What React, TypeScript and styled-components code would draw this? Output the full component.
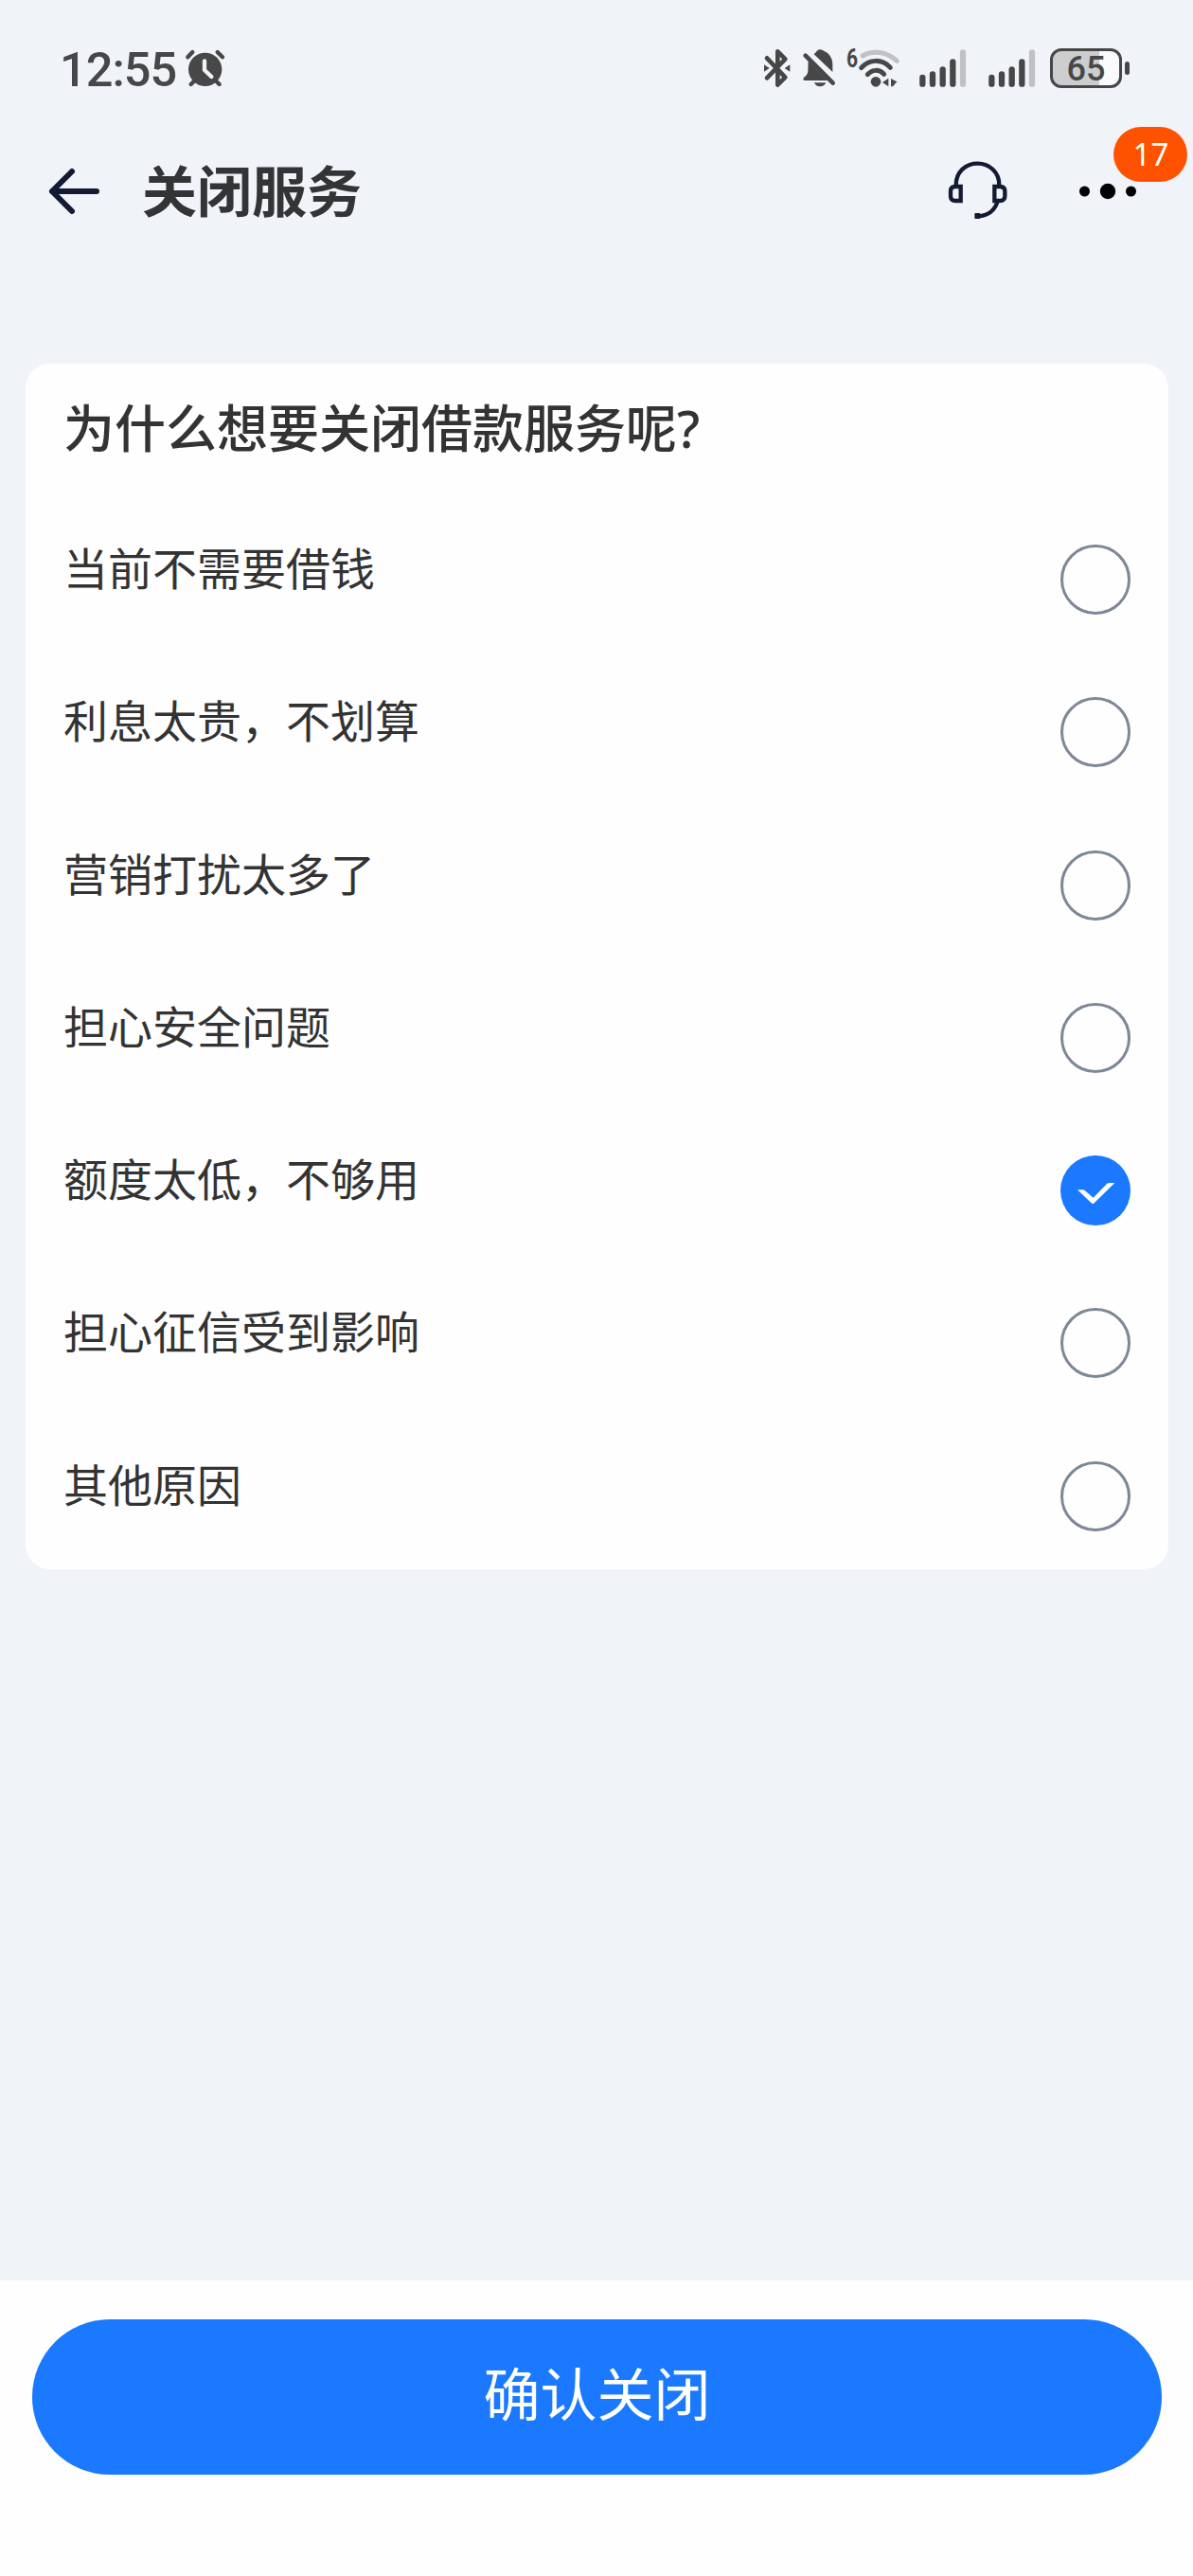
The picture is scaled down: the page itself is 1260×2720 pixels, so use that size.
import React, { useState } from "react";
import styled, { createGlobalStyle } from "styled-components";

const INK = "#474748";
const NAVY = "#141a33";
const BLUE = "#1a79ff";

const GlobalStyle = createGlobalStyle`
  *, *::before, *::after { box-sizing: border-box; }
  html, body { margin: 0; padding: 0; }
  body {
    background: #f0f4f9;
    font-family: "Noto Sans", "Noto Sans CJK SC", sans-serif;
    color: #333333;
  }
  button { font: inherit; border: 0; padding: 0; background: none; color: inherit; cursor: pointer; }
  svg { display: block; overflow: visible; }
`;

const Screen = styled.div`
  width: 1260px;
  height: 2720px;
  display: flex;
  flex-direction: column;
  overflow: hidden;
  background: #f0f4f9;
`;

const StatusBar = styled.header`
  height: 146px;
  padding: 50px 67px 0 63px;
  display: flex;
  align-items: flex-start;
  justify-content: space-between;
`;

const StatusGroup = styled.div`
  display: flex;
  align-items: flex-start;
  height: 45px;
`;

const Clock = styled.time`
  width: 132px;
  font-family: Roboto, "Liberation Sans", sans-serif;
  font-size: 50.5px;
  font-weight: 500;
  line-height: 47px;
  letter-spacing: -1px;
  color: ${INK};
  white-space: nowrap;
`;

const StatusIcon = styled.span<{ $gap: number }>`
  margin-left: ${(p) => p.$gap}px;
`;

const Battery = styled.div`
  margin: 1px 0 0 15px;
  display: flex;
  align-items: center;
  gap: 3px;
`;

const BatteryBody = styled.div`
  width: 76px;
  height: 42px;
  border: 3px solid ${INK};
  border-radius: 12px;
  background: linear-gradient(90deg, #cccdcf 0 49px, #f8fafc 49px);
  background-clip: padding-box;
  display: flex;
  align-items: center;
  justify-content: center;
  font-family: Roboto, "Liberation Sans", sans-serif;
  font-size: 36px;
  font-weight: 500;
  line-height: 38px;
  padding-top: 2px;
  color: ${INK};
`;

const BatteryTip = styled.div`
  width: 5px;
  height: 14px;
  border-radius: 3px;
  background: ${INK};
`;

const NavBar = styled.nav`
  height: 112px;
  padding: 0 57px 0 48px;
  display: flex;
  align-items: center;
`;

const NavTitle = styled.h1`
  margin: 0 auto 0 42px;
  padding-bottom: 1px;
  font-size: 58px;
  font-weight: 700;
  line-height: 80px;
  color: #333436;
`;

const NavButton = styled.button`
  position: relative;
  display: block;
`;

const MoreButton = styled(NavButton)`
  margin-left: 72px;
`;

const Badge = styled.span`
  position: absolute;
  left: 38px;
  top: -40px;
  width: 78px;
  height: 58px;
  padding-left: 1px;
  border-radius: 29px;
  background: #ff5200;
  color: #fff;
  font-size: 33px;
  line-height: 58px;
  text-align: center;
`;

const Card = styled.main`
  margin: 126px 26px 0 27px;
  height: 1273px;
  padding: 29px 40px 0 40px;
  border-radius: 26px;
  background: #fefefe;
`;

const Question = styled.h2`
  margin: 0;
  font-size: 54px;
  font-weight: 500;
  line-height: 78px;
  white-space: nowrap;
`;

const Options = styled.ul`
  margin: 75px 0 0;
  padding: 0;
  list-style: none;
`;

const Option = styled.li`
  height: 161.25px;
  padding-top: 9px;
  display: flex;
  align-items: flex-start;
  justify-content: space-between;
  font-size: 47px;
  line-height: 50px;
  cursor: pointer;
`;

const Radio = styled.span<{ $on: boolean }>`
  width: 74px;
  height: 74px;
  border-radius: 50%;
  border: ${(p) => (p.$on ? "0" : "3px solid #7d8796")};
  background: ${(p) => (p.$on ? BLUE : "transparent")};
`;

const Footer = styled.footer`
  margin-top: auto;
  height: 312px;
  padding: 41px 33px 0 34px;
  background: #fefefe;
`;

const ConfirmButton = styled.button`
  width: 100%;
  height: 164px;
  padding-bottom: 6px;
  border-radius: 82px;
  background: ${BLUE};
  color: #fff;
  font-size: 60px;
  line-height: 158px;
  text-align: center;
`;

const AlarmIcon = () => (
  <svg width="44" height="45" viewBox="465 60 132 135" fill="none" stroke={INK} strokeLinecap="round">
    <circle cx="530" cy="130" r="53" fill={INK} stroke="none" />
    <path d="M475 91L490 75M569 75L585 91M495 167L485 177M565 167L575 177" strokeWidth="13" />
    <path d="M528 103V132L550 153" stroke="#f0f4f9" strokeWidth="13" strokeLinejoin="round" />
  </svg>
);

const BluetoothIcon = () => (
  <svg width="30" height="45" viewBox="78 60 90 135" fill="none" stroke={INK}>
    <path
      d="M90 94L148 155L124 179V73L148 97L90 157"
      strokeWidth="14"
      strokeLinecap="round"
      strokeLinejoin="round"
    />
    <path d="M81 115L98 126L81 137ZM163 115L146 126L163 137Z" fill={INK} stroke="none" />
  </svg>
);

const MutedBellIcon = () => (
  <svg width="38" height="45" viewBox="198 60 114 135" fill={INK}>
    <path d="M221 103L283 165H210Q204 165 205 159Q207 154 213 151Q219 146 220 136Z" />
    <path d="M239 82Q245 77 250 70Q258 64 268 70Q296 82 298 112V138Z" />
    <path d="M240 172H277Q272 184 258 184Q245 184 240 172Z" />
    <path d="M212 86L299 173" stroke={INK} strokeWidth="14" strokeLinecap="round" />
  </svg>
);

const WifiMark = styled.span`
  display: flex;
`;

const WifiBand = styled.span`
  width: 12px;
  margin-top: -2px;
  font-family: Roboto, "Liberation Sans", sans-serif;
  font-size: 27px;
  font-weight: 700;
  line-height: 28px;
  transform: scaleX(0.78);
  transform-origin: left;
  color: ${INK};
`;

const WifiIcon = () => (
  <WifiMark>
    <WifiBand>6</WifiBand>
    <svg width="44" height="45" viewBox="378 60 132 135" fill="none" stroke={INK} strokeLinecap="round">
      <path d="M393 87C427 67 470 74 502 103" stroke="#bfc1c4" strokeWidth="15" />
      <path d="M389 125C414 96 455 96 481 124" strokeWidth="15" />
      <path d="M409 146C424 129 447 129 461 145" strokeWidth="15" />
      <circle cx="435" cy="169" r="16" fill={INK} stroke="none" />
      <path d="M456 171L475 158V184ZM483 159L502 169L489 184H483Z" fill={INK} stroke="none" />
    </svg>
  </WifiMark>
);

const SignalIcon = () => (
  <svg width="50" height="45" viewBox="0 0 150 135" strokeWidth="19" strokeLinecap="round">
    <path d="M10 96V116M42 85V116M74 70V116M106 46V116" stroke={INK} />
    <path d="M138 16V116" stroke="#bfc1c4" />
  </svg>
);

const BackIcon = () => (
  <svg width="60" height="56" viewBox="48 174 60 56" fill="none" stroke={NAVY} strokeWidth="6" strokeLinecap="round" strokeLinejoin="round">
    <path d="M76 181L55 202L76 223M55 202H102" />
  </svg>
);

const HeadsetIcon = () => (
  <svg width="66" height="66" viewBox="90 147 198 198" fill="none" stroke={NAVY} strokeWidth="13">
    <path d="M119 232V226C119 185 149 158 187 158C226 158 256 186 256 226V232" />
    <path d="M134 231H117C107 231 102 237 102 246V261C102 270 107 276 117 276H134Z" />
    <path d="M241 231H258C269 231 274 237 274 246V261C274 270 269 276 258 276H241Z" />
    <path d="M250 280C240 309 219 323 190 325" />
    <rect x="178" y="315" width="18" height="18" rx="3" fill={NAVY} stroke="none" />
  </svg>
);

const MoreIcon = () => (
  <svg width="65" height="56" viewBox="1138 174 65 56" fill="#000">
    <circle cx="1145.5" cy="202" r="5.5" />
    <circle cx="1170" cy="202" r="8.2" />
    <circle cx="1194.5" cy="202" r="5.5" />
  </svg>
);

const CheckIcon = () => (
  <svg width="74" height="74" viewBox="120 90 222 222" fill="#fff">
    <path d="M174 199H191Q195 199 198 202L224 224L267 180Q271 177 276 177H292L227 241Q223 245 218 241Z" />
  </svg>
);

const REASONS = [
  "当前不需要借钱",
  "利息太贵，不划算",
  "营销打扰太多了",
  "担心安全问题",
  "额度太低，不够用",
  "担心征信受到影响",
  "其他原因",
];

export default function App() {
  const [selected, setSelected] = useState(4);

  return (
    <>
      <GlobalStyle />
      <Screen lang="zh-CN">
        <StatusBar>
          <StatusGroup>
            <Clock>12:55</Clock>
            <AlarmIcon />
          </StatusGroup>
          <StatusGroup>
            <StatusIcon $gap={0}><BluetoothIcon /></StatusIcon>
            <StatusIcon $gap={10}><MutedBellIcon /></StatusIcon>
            <StatusIcon $gap={10}><WifiIcon /></StatusIcon>
            <StatusIcon $gap={21}><SignalIcon /></StatusIcon>
            <StatusIcon $gap={23}><SignalIcon /></StatusIcon>
            <Battery>
              <BatteryBody>65</BatteryBody>
              <BatteryTip />
            </Battery>
          </StatusGroup>
        </StatusBar>

        <NavBar>
          <NavButton aria-label="返回"><BackIcon /></NavButton>
          <NavTitle>关闭服务</NavTitle>
          <NavButton aria-label="客服"><HeadsetIcon /></NavButton>
          <MoreButton aria-label="更多">
            <MoreIcon />
            <Badge>17</Badge>
          </MoreButton>
        </NavBar>

        <Card>
          <Question>为什么想要关闭借款服务呢?</Question>
          <Options>
            {REASONS.map((reason, i) => (
              <Option key={reason} onClick={() => setSelected(i)}>
                <span>{reason}</span>
                <Radio $on={i === selected}>{i === selected && <CheckIcon />}</Radio>
              </Option>
            ))}
          </Options>
        </Card>

        <Footer>
          <ConfirmButton>确认关闭</ConfirmButton>
        </Footer>
      </Screen>
    </>
  );
}
